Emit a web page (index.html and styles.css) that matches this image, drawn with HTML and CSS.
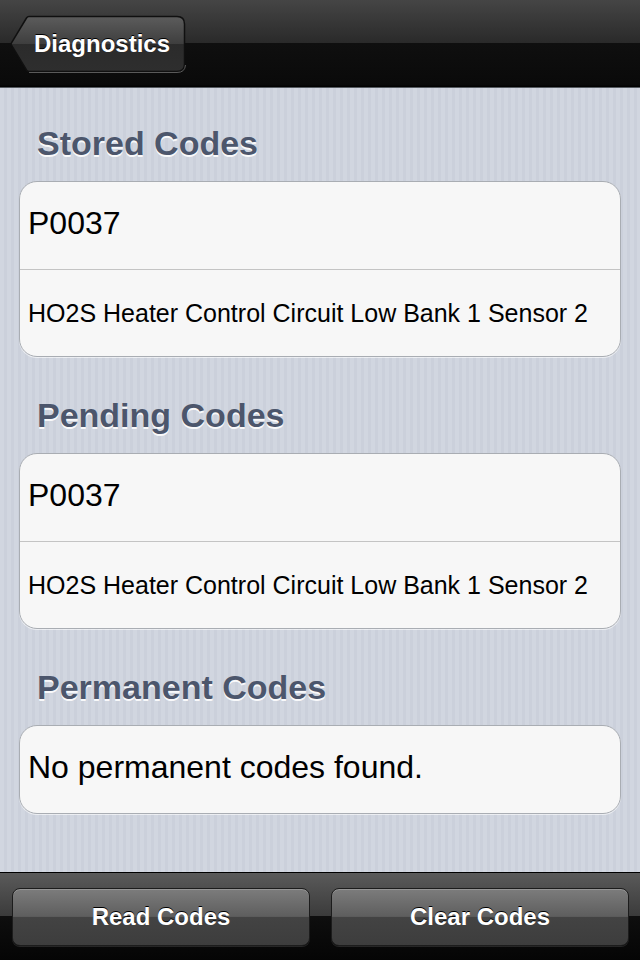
FILE: index.html
```html
<!DOCTYPE html>
<html lang="en">
<head>
    <meta charset="UTF-8">
    <meta name="viewport" content="width=device-width, initial-scale=1.0">
    <title>Diagnostics</title>
    <link rel="stylesheet" href="styles.css">
</head>
<body>
    <header class="navbar">
        <a class="back-button">
            <svg class="back-shape" width="176" height="58" viewBox="0 0 176 58">
                <defs>
                    <linearGradient id="backFill" x1="0" y1="0" x2="0" y2="1">
                        <stop offset="0" stop-color="#5c5c5c"/>
                        <stop offset="0.5" stop-color="#3e3e3e"/>
                        <stop offset="0.5" stop-color="#2b2b2b"/>
                        <stop offset="1" stop-color="#2e2e2e"/>
                    </linearGradient>
                </defs>
                <path d="M19 1.5 H167 Q174.5 1.5 174.5 9 V49 Q174.5 56.5 167 56.5 H19 Q17.5 56.5 16.5 55 L1.5 30.2 Q0.8 29 1.5 27.8 L16.5 3 Q17.5 1.5 19 1.5 Z" fill="url(#backFill)" stroke="#101010" stroke-width="1.5"/>
                <path d="M19 57.5 H167 Q175 57.5 175.5 50" fill="none" stroke="#5a5a5a" stroke-width="1"/>
            </svg>
            <span class="back-label">Diagnostics</span>
        </a>
    </header>

    <main class="content">
        <section class="group">
            <h2 class="group-title">Stored Codes</h2>
            <div class="card">
                <div class="row row-code">P0037</div>
                <div class="row row-desc">HO2S Heater Control Circuit Low Bank 1 Sensor 2</div>
            </div>
        </section>
        <section class="group">
            <h2 class="group-title">Pending Codes</h2>
            <div class="card">
                <div class="row row-code">P0037</div>
                <div class="row row-desc">HO2S Heater Control Circuit Low Bank 1 Sensor 2</div>
            </div>
        </section>
        <section class="group">
            <h2 class="group-title">Permanent Codes</h2>
            <div class="card">
                <div class="row row-code">No permanent codes found.</div>
            </div>
        </section>
    </main>

    <footer class="toolbar">
        <button class="tool-button">Read Codes</button>
        <button class="tool-button">Clear Codes</button>
    </footer>
</body>
</html>
```

FILE: styles.css
```css
* {
    margin: 0;
    padding: 0;
    box-sizing: border-box;
}
body {
    font-family: "Liberation Sans", Arial, sans-serif;
    height: 960px;
    width: 640px;
    display: flex;
    flex-direction: column;
    overflow: hidden;
    background: #000;
}

/* top bar */
.navbar {
    height: 88px;
    flex: none;
    display: flex;
    align-items: center;
    padding-left: 10px;
    background: linear-gradient(#454545 0, #2a2a2a 49%, #0f0f0f 50%, #0a0a0a 97%, #000 100%);
    border-bottom: 1px solid #555a60;
}
.back-button {
    position: relative;
    width: 176px;
    height: 58px;
    display: flex;
    align-items: center;
    padding-left: 24px;
}
.back-shape {
    position: absolute;
    top: 0;
    left: 0;
}
.back-label {
    position: relative;
    color: #fff;
    font-weight: bold;
    font-size: 24px;
    text-shadow: 0 -1px 0 #000;
}

/* grouped table */
.content {
    flex: 1;
    background:
        repeating-linear-gradient(90deg, #d1d6e0 0, #d1d6e0 4px, #cbd0db 4px, #cbd0db 7px);
}
.group-title {
    font-size: 34px;
    line-height: 40px;
    font-weight: bold;
    color: #4c566c;
    text-shadow: 0 2px 0 rgba(255, 255, 255, 0.9);
    padding: 38px 0 18px 37px;
}
.group:first-child .group-title {
    padding-top: 35px;
}
.card {
    margin: 0 19px;
    background: #f7f7f7;
    border: 1px solid #a9adb3;
    border-radius: 18px;
    box-shadow: 0 1px 0 rgba(255, 255, 255, 0.6);
    overflow: hidden;
}
.row {
    height: 87px;
    display: flex;
    align-items: center;
    padding: 0 8px;
    color: #000;
}
.row + .row {
    border-top: 1px solid #c4c4c4;
}
.row-code {
    font-size: 32px;
    padding-bottom: 4px;
}
.row-desc {
    font-size: 25px;
}

/* bottom toolbar */
.toolbar {
    height: 88px;
    flex: none;
    display: flex;
    align-items: center;
    gap: 21px;
    padding: 0 11px 0 12px;
    border-top: 1px solid #000;
    background: linear-gradient(#5a5a5a 0, #3b3b3b 49%, #0e0e0e 50%, #050505 100%);
}
.tool-button {
    flex: 1;
    height: 58px;
    border: 1px solid #1c1c1c;
    border-radius: 8px;
    background: linear-gradient(#7c7c7c 0, #5e5e5e 49%, #434343 50%, #3d3d3d 100%);
    box-shadow: inset 0 1px 0 rgba(255, 255, 255, 0.2), 0 1px 0 rgba(255, 255, 255, 0.12);
    color: #fff;
    font-family: "Liberation Sans", Arial, sans-serif;
    font-weight: bold;
    font-size: 24px;
    text-shadow: 0 -1px 0 #000;
}
```
